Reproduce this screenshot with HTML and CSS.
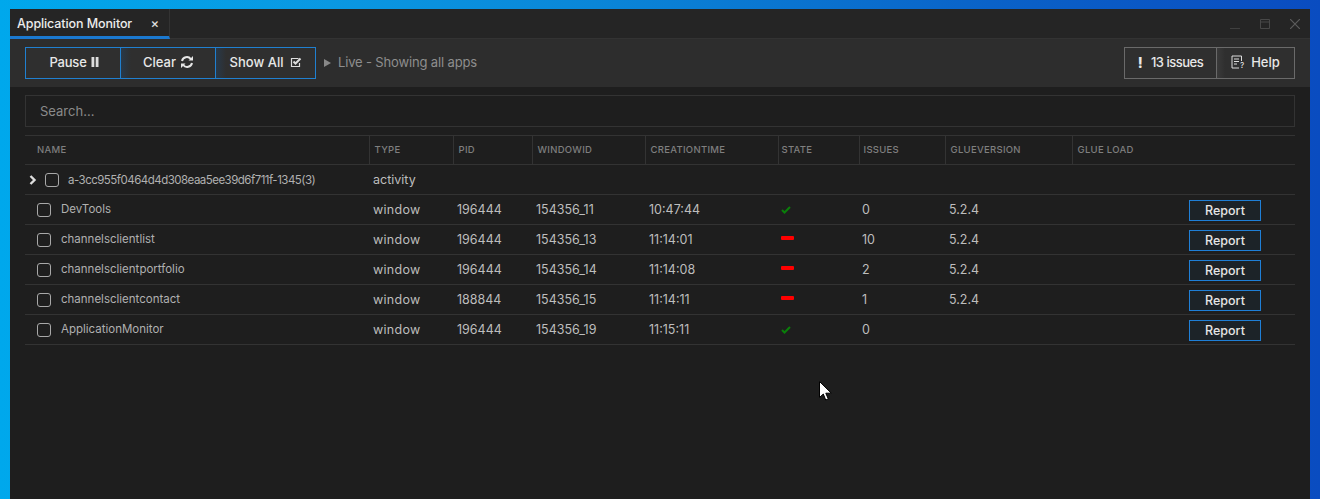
FILE: index.html
```html
<!DOCTYPE html>
<html lang="en">
<head>
<meta charset="utf-8">
<title>Application Monitor</title>
<link rel="stylesheet" href="styles.css">
</head>
<body>
<div class="window">
  <header class="tabstrip">
    <div class="tab"><span>Application Monitor</span><span class="tab-x">×</span></div>
    <div class="winctl">
      <svg width="10" height="10" viewBox="0 0 10 10"><path d="M0 9.500h10" stroke="#404040" fill="none"/></svg>
      <svg width="10" height="10" viewBox="0 0 10 10"><path d="M.5.500h9v9h-9zM.5 3h9" stroke="#484848" fill="none"/></svg>
      <svg width="10" height="10" viewBox="0 0 10 10"><path d="M0 0l10 10M10 0L0 10" stroke="#5c5c5c" stroke-width="1.200" fill="none"/></svg>
    </div>
  </header>
  <section class="toolbar">
    <div class="btn-group blue">
      <button class="btn w94"><span class="pause">Pause</span> <svg width="8" height="10" viewBox="0 0 8 10"><path d="M.5 0h2.800v10H.5zM4.700 0h2.800v10H4.700z" fill="#ddd"/></svg></button>
      <button class="btn w95">Clear <svg width="14" height="14" viewBox="0 0 14 14"><path d="M2 6a5 5 0 0 1 8.800-2M12 8a5 5 0 0 1-8.800 2" stroke="#e6e6e6" stroke-width="2" fill="none"/><path d="M8.500 5.500H13V1zM5.500 8.500H1V13z" fill="#e6e6e6"/></svg></button>
      <button class="btn w100">Show All <svg class="gap" width="12" height="11" viewBox="0 0 12 11"><path d="M9.500 6v3.500h-8v-8h7" stroke="#ddd" stroke-width="1.200" fill="none"/><path d="M3.500 4.500l2 2 5-5" stroke="#ddd" stroke-width="2" fill="none"/></svg></button>
    </div>
    <svg class="live-arrow" width="7" height="8" viewBox="0 0 7 8"><path d="M0 0l7 4-7 4z" fill="#888"/></svg>
    <span class="live">Live - Showing all apps</span>
    <div class="btn-group grey">
      <button class="btn w91"><b class="bang">!</b> <span class="issues">13 issues</span></button>
      <button class="btn w78"><svg width="14" height="14" viewBox="0 0 14 14"><path d="M10.500 6V1H1v12h7M3 4h5M3 6.500h5M3 9h3" stroke="#ddd" fill="none"/><text x="9" y="13" font-size="8" fill="#ddd" font-family="Inter">?</text></svg> Help</button>
    </div>
  </section>
  <main class="content">
    <div class="search">Search...</div>
    <table class="grid">
      <colgroup>
        <col class="c-name"><col class="c-type"><col class="c-pid"><col class="c-win"><col class="c-time"><col class="c-state"><col class="c-issues"><col class="c-glue"><col>
      </colgroup>
      <thead>
        <tr>
          <th class="first">NAME</th><th>TYPE</th><th>PID</th><th>WINDOWID</th><th>CREATIONTIME</th><th class="tight">STATE</th><th class="mid">ISSUES</th><th>GLUEVERSION</th><th>GLUE LOAD</th>
        </tr>
      </thead>
      <tbody>
        <tr>
          <td class="name"><div class="namecell"><svg class="chev" width="8" height="10" viewBox="0 0 8 10"><path d="M1.500 1l4 4-4 4" stroke="#ddd" stroke-width="2.400" fill="none"/></svg><i class="check"></i><span class="label parent">a-3cc955f0464d4d308eaa5ee39d6f711f-1345(3)</span></div></td>
          <td>activity</td><td></td><td></td><td></td><td></td><td></td><td></td><td></td>
        </tr>
        <tr>
          <td class="name"><div class="namecell child"><i class="check"></i><span class="label">DevTools</span></div></td>
          <td class="word">window</td><td>196444</td><td>154356_11</td><td>10:47:44</td>
          <td class="state"><svg width="10" height="8" viewBox="0 0 10 8"><path d="M1 4l2.500 2.500L9 1" stroke="#0a7f0a" stroke-width="2" fill="none"/></svg></td>
          <td class="count">0</td><td>5.2.4</td><td class="act"><button class="report">Report</button></td>
        </tr>
        <tr>
          <td class="name"><div class="namecell child"><i class="check"></i><span class="label">channelsclientlist</span></div></td>
          <td class="word">window</td><td>196444</td><td>154356_13</td><td>11:14:01</td>
          <td class="state"><i class="dash"></i></td>
          <td class="count">10</td><td>5.2.4</td><td class="act"><button class="report">Report</button></td>
        </tr>
        <tr>
          <td class="name"><div class="namecell child"><i class="check"></i><span class="label">channelsclientportfolio</span></div></td>
          <td class="word">window</td><td>196444</td><td>154356_14</td><td>11:14:08</td>
          <td class="state"><i class="dash"></i></td>
          <td class="count">2</td><td>5.2.4</td><td class="act"><button class="report">Report</button></td>
        </tr>
        <tr>
          <td class="name"><div class="namecell child"><i class="check"></i><span class="label">channelsclientcontact</span></div></td>
          <td class="word">window</td><td>188844</td><td>154356_15</td><td>11:14:11</td>
          <td class="state"><i class="dash"></i></td>
          <td class="count">1</td><td>5.2.4</td><td class="act"><button class="report">Report</button></td>
        </tr>
        <tr>
          <td class="name"><div class="namecell child"><i class="check"></i><span class="label">ApplicationMonitor</span></div></td>
          <td class="word">window</td><td>196444</td><td>154356_19</td><td>11:15:11</td>
          <td class="state"><svg width="10" height="8" viewBox="0 0 10 8"><path d="M1 4l2.500 2.500L9 1" stroke="#0a7f0a" stroke-width="2" fill="none"/></svg></td>
          <td class="count">0</td><td></td><td class="act"><button class="report">Report</button></td>
        </tr>
      </tbody>
    </table>
  </main>
</div>
<svg class="cursor" width="13" height="20" viewBox="0 0 13 20"><path d="M.5.500v16l3.800-3.500 2.400 6 2.600-1.100-2.500-5.700h5.500z" fill="#fff" stroke="#000" stroke-width="1"/></svg>
</body>
</html>
```

FILE: styles.css
```css
* { box-sizing: border-box; }
html, body { margin: 0; height: 100%; overflow: hidden; }
body {
  padding: 9px 10px 0;
  background: linear-gradient(90deg, #00a8ec 0, #0a98e2 25%, #0a86d8 45%, #0a62c8 75%, #0a4cc0 100%);
  font-family: Inter, "Noto Sans", sans-serif;
  color: #c8c8c8;
  position: relative;
}
.window { height: 490px; background: #1e1e1e; display: flex; flex-direction: column; }
.tabstrip { height: 30px; background: #252525; display: flex; justify-content: space-between; border-bottom: 1px solid #333; }
.tab {
  width: 160px; height: 30px; padding: 1px 11px 0 7px; border-bottom: 3px solid #1b79d0; border-right: 1px solid #333;
  display: flex; align-items: center; justify-content: space-between;
  font-size: 12.500px; font-weight: 500; color: #ececec; letter-spacing: -0.100px;
}
.tab-x { font-size: 13px; color: #ddd; margin-right: -1px; }
.winctl { display: flex; gap: 20px; align-items: center; padding-right: 10px; }
.toolbar { height: 48px; background: #2d2d2d; display: flex; align-items: center; padding: 0 15px; }
.btn-group { display: flex; height: 32px; border: 1px solid; }
.btn-group.blue { border-color: #2080d0; }
.btn-group.grey { border-color: #6a6a6a; margin-left: auto; }
.btn {
  height: 30px; background: #2f2f2f; border: 0; color: #e8e8e8; padding: 0 0 2px;
  font: 500 13px Inter, "Noto Sans", sans-serif; display: flex; align-items: center; justify-content: center; gap: 4px;
}
.blue .btn + .btn { border-left: 1px solid #2080d0; background: linear-gradient(90deg, #28394a 0, #2f2f2f 10px); padding-left: 1px; }
.grey .btn + .btn { border-left: 1px solid #6a6a6a; background: linear-gradient(90deg, #3a3a3a 0, #2f2f2f 8px); }
.pause { letter-spacing: -0.200px; margin-left: 2px; }
.w94 { width: 94px; }
.w95 { width: 95px; }
.w100 { width: 100px; }
.w91 { width: 91px; gap: 8px; }
.w78 { width: 78px; gap: 6px; }
.gap { margin-left: 3px; }
.bang { font-weight: 800; font-size: 14px; }
.issues { letter-spacing: -0.500px; }
.live-arrow { margin-left: 8px; }
.live { margin: -2px 0 0 7px; font-size: 13px; color: #8e8e8e; letter-spacing: -0.150px; }
.content { flex: 1; padding: 8px 15px 0; }
.search {
  height: 32px; border: 1px solid #333; padding: 0 14px; display: flex; align-items: center;
  font-size: 13px; color: #8a8a8a;
}
.grid { margin-top: 8px; width: 100%; border-collapse: collapse; table-layout: fixed; border-top: 1px solid #333; }
.c-name { width: 344px; }
.c-type { width: 84px; }
.c-pid { width: 79px; }
.c-win { width: 113px; }
.c-time { width: 133px; }
.c-state { width: 81px; }
.c-issues { width: 86px; }
.c-glue { width: 127px; }
th {
  height: 29px; padding: 0 0 2px 5px; text-align: left; font-size: 9.500px; font-weight: 500; color: #7f7f7f;
  border-bottom: 1px solid #333; border-left: 1px solid #333; letter-spacing: 0.300px;
}
th.first { border-left: 0; padding-left: 12px; }
th.tight { padding-left: 3px; }
th.mid { padding-left: 4px; }
td { height: 30px; padding: 0 0 0 4px; font-size: 12.500px; color: #bdbdbd; border-bottom: 1px solid #333; }
td.word { letter-spacing: 0.300px; }
td.count { padding-left: 3px; }
.namecell { display: flex; align-items: center; padding-left: 1px; }
.namecell.child { padding-left: 8px; }
.chev { margin-right: 8px; margin-left: -1px; }
.check { width: 14px; height: 14px; border: 1px solid #a8a8a8; border-radius: 3px; }
.label { font-size: 11.500px; color: #b0b0b0; margin-left: 10px; position: relative; top: -1px; }
.label.parent { margin-left: 9px; top: 0; letter-spacing: -0.520px; }
.state svg { display: block; margin-left: -1px; }
.state { padding-left: 4px; }
.dash { display: block; width: 13px; height: 4px; background: #f00; border-radius: 1px; margin: -3px 0 0 -1px; }
.act { text-align: right; padding: 0 34px 0 0; }
.report {
  width: 72px; height: 21px; background: #1c2328; border: 1px solid #1f7fd6; color: #e6e6e6; padding: 0;
  font: 500 12.500px Inter, "Noto Sans", sans-serif; vertical-align: middle; position: relative; top: 1px;
}
.cursor { position: absolute; left: 819px; top: 381px; }
```
